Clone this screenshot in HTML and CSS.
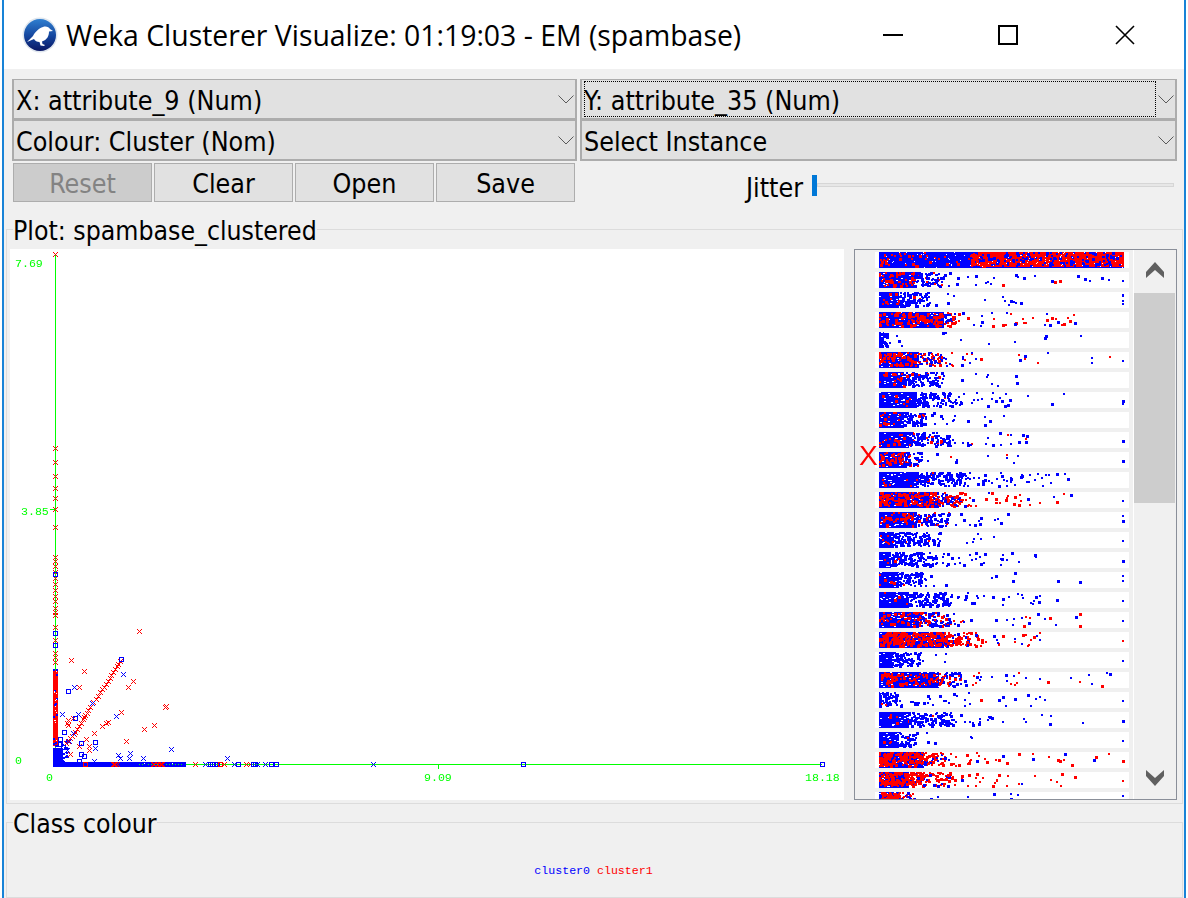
FILE: index.html
```html
<!DOCTYPE html>
<html lang="en">
<head>
<meta charset="utf-8">
<title>Weka Clusterer Visualize</title>
<link rel="stylesheet" href="styles.css">
</head>
<body>
<div class="window">
  <header class="titlebar">
    <svg class="app-icon" viewBox="0 0 36 36" aria-hidden="true">
      <defs>
        <linearGradient id="orb" x1="0" y1="0" x2="0" y2="1">
          <stop offset="0" stop-color="#2f7fd0"/>
          <stop offset="0.55" stop-color="#14449c"/>
          <stop offset="1" stop-color="#0a1764"/>
        </linearGradient>
      </defs>
      <circle cx="18" cy="18" r="17.500" fill="#dfe6ee"/>
      <circle cx="18" cy="18" r="16" fill="url(#orb)"/>
      <path d="M5 25 L11 19 C13 15 17 11 21 10 C24 9 27 10 28 12 L31 14 L27 14.500 C27 19 25 23 20 24.500 L20.500 27 L23 28 L22 29 L18.500 28.500 L17.500 25 C15 25 13 24 12 22 Z" fill="#fff"/>
    </svg>
    <h1 class="title">Weka Clusterer Visualize: 01:19:03 - EM (spambase)</h1>
    <div class="win-buttons">
      <svg class="win-btn min" viewBox="0 0 20 20" aria-hidden="true"><path d="M0 10H20" stroke="#000" stroke-width="2"/></svg>
      <svg class="win-btn max" viewBox="0 0 20 20" aria-hidden="true"><rect x="1" y="1" width="18" height="18" fill="none" stroke="#000" stroke-width="2"/></svg>
      <svg class="win-btn close" viewBox="0 0 20 20" aria-hidden="true"><path d="M1 1L19 19M19 1L1 19" stroke="#000" stroke-width="1.600"/></svg>
    </div>
  </header>

  <main class="content">
    <section class="controls">
      <div class="combo"><span>X: attribute_9 (Num)</span><svg class="chev" viewBox="0 0 16 9" aria-hidden="true"><path d="M0.500 0.500L8 8L15.500 0.500" fill="none" stroke="#5a5a5a"/></svg></div>
      <div class="combo focused"><span class="focus-ring">Y: attribute_35 (Num)</span><svg class="chev" viewBox="0 0 16 9" aria-hidden="true"><path d="M0.500 0.500L8 8L15.500 0.500" fill="none" stroke="#5a5a5a"/></svg></div>
      <div class="combo"><span>Colour: Cluster (Nom)</span><svg class="chev" viewBox="0 0 16 9" aria-hidden="true"><path d="M0.500 0.500L8 8L15.500 0.500" fill="none" stroke="#5a5a5a"/></svg></div>
      <div class="combo"><span>Select Instance</span><svg class="chev" viewBox="0 0 16 9" aria-hidden="true"><path d="M0.500 0.500L8 8L15.500 0.500" fill="none" stroke="#5a5a5a"/></svg></div>
      <div class="buttons">
        <button class="btn" disabled>Reset</button>
        <button class="btn">Clear</button>
        <button class="btn">Open</button>
        <button class="btn">Save</button>
      </div>
      <div class="jitter">
        <span class="jitter-label">Jitter</span>
        <div class="slider"><div class="thumb"></div><div class="track"></div></div>
      </div>
    </section>

    <fieldset class="group plot-group">
      <legend>Plot: spambase_clustered</legend>
      <div class="plot-row">
        <div class="plot">
          <canvas id="plot" width="834" height="551"></canvas>
          <span class="tick-label" style="left:5px;top:9px">7.69</span>
          <span class="tick-label" style="left:11px;top:257px">3.85</span>
          <span class="tick-label" style="left:5px;top:506px">0</span>
          <span class="tick-label" style="left:36px;top:523px">0</span>
          <span class="tick-label" style="left:414px;top:523px">9.09</span>
          <span class="tick-label" style="left:795px;top:523px">18.18</span>
        </div>
        <div class="attr-panel">
          <div class="attr-gutter"><span class="x-mark">X</span></div>
          <canvas id="bars" width="258" height="549"></canvas>
          <div class="scrollbar">
            <div class="arrow-box"><svg class="arrow up" viewBox="0 0 18 16" aria-hidden="true"><path d="M0 10L9 0L18 10V16L9 8L0 16Z" fill="#606060"/></svg></div>
            <div class="sb-thumb"></div>
            <div class="sb-space"></div>
            <div class="arrow-box"><svg class="arrow" viewBox="0 0 18 16" aria-hidden="true"><path d="M0 0L9 8L18 0V6L9 16L0 6Z" fill="#606060"/></svg></div>
          </div>
        </div>
      </div>
    </fieldset>

    <fieldset class="group class-group">
      <legend>Class colour</legend>
      <div class="class-legend"><span class="c0">cluster0</span> <span class="c1">cluster1</span></div>
    </fieldset>
  </main>
</div>
<script src="script.js"></script>
</body>
</html>
```

FILE: styles.css
```css
* { box-sizing: border-box; }
html, body { margin: 0; height: 100%; background: #fff; }
body { padding: 0 2px 0 2px; overflow: hidden; }
.window {
  height: 898px;
  border-left: 2px solid #1883d7;
  border-right: 2px solid #1883d7;
  background: #f0f0f0;
  display: flex;
  flex-direction: column;
  font-family: "DejaVu Sans Condensed", "DejaVu Sans", sans-serif;
  font-stretch: condensed;
  color: #000;
}
.titlebar {
  height: 69px;
  background: #fff;
  display: flex;
  align-items: center;
  padding-left: 18px;
  flex: none;
}
.app-icon { width: 36px; height: 36px; flex: none; }
.title {
  margin: 0 0 0 8px;
  font: 400 28.400px/36px "Open Sans", sans-serif;
  white-space: nowrap;
}
.win-buttons { margin-left: auto; display: flex; align-items: center; padding-right: 49px; }
.win-btn { width: 20px; height: 20px; display: block; }
.win-btn.min { margin-right: 95px; }
.win-btn.max { margin-right: 97px; }
.content { flex: 1; display: flex; flex-direction: column; min-height: 0; padding: 10px 0 0 2px; }
.controls {
  display: grid;
  grid-template-columns: 565px 597px;
  grid-template-rows: 41px 41px 41px;
  column-gap: 3px;
  margin-left: 6px;
  font-size: 26.600px;
}
.combo {
  background: #e1e1e1;
  border: 2px solid #acacac;
  border-top-width: 1px;
  display: flex;
  align-items: center;
  justify-content: space-between;
  padding: 0 1px 0 2px;
  white-space: nowrap;
  line-height: 36px;
}
.combo span { flex: 1; padding-top: 2px; height: 36px; line-height: 36px; }
.focus-ring { outline: 1px dotted #000; outline-offset: -1px; }
.chev { width: 16px; height: 9px; flex: none; margin-left: 2px; }
.buttons {
  display: grid;
  grid-template-columns: repeat(4, 139px);
  column-gap: 2px;
  padding: 2px 0 0 1px;
}
.btn {
  height: 39px;
  background: #e1e1e1;
  border: 1px solid #adadad;
  font: inherit;
  font-stretch: condensed;
  color: #000;
  padding: 2px 0 0;
  line-height: 36px;
}
.btn:disabled { background: #cccccc; color: #838383; }
.jitter { display: flex; align-items: center; padding-left: 166px; padding-top: 12px; }
.jitter-label { width: 66px; }
.slider { flex: 1; display: flex; align-items: center; margin-right: 3px; margin-top: -5px; }
.thumb { width: 5px; height: 21px; background: #0078d7; flex: none; }
.track { flex: 1; height: 4px; background: #e7e7e7; border: 1px solid #d6d6d6; }

.group { border: 1px solid #dcdcdc; margin: 0; min-width: 0; }
.group legend { padding: 0; font-size: 26.400px; line-height: 40px; height: 36px; }
.plot-group { margin: 9px 0 0 0; width: 1177px; padding: 2px 5px 3px 3px; height: 593px; }
.plot-group legend { margin-left: 3px; }
.plot-row { display: flex; justify-content: space-between; height: 551px; }
.plot { position: relative; width: 834px; height: 551px; background: #fff; }
.plot canvas { display: block; }
.tick-label {
  position: absolute;
  font: 11.600px/12px "Liberation Mono", monospace;
  color: #00ff00;
}
.attr-panel {
  width: 323px;
  height: 551px;
  border: 1px solid #8a8f99;
  display: flex;
  background: #f0f0f0;
}
.attr-gutter { width: 20px; position: relative; flex: none; }
.x-mark {
  position: absolute;
  left: 4px;
  top: 190px;
  font: 28px/32px "Liberation Sans", sans-serif;
  color: #ff0000;
}
#bars { display: block; flex: none; }
.scrollbar {
  width: 43px;
  border-left: 1px solid #fff;
  display: flex;
  flex-direction: column;
  flex: none;
}
.arrow-box { height: 43px; display: flex; align-items: center; justify-content: center; flex: none; padding-right: 1px; }
.arrow { width: 18px; height: 16px; display: block; }
.arrow.up { margin-bottom: 3px; }
.sb-thumb { height: 210px; background: #cdcdcd; margin-right: 1px; flex: none; }
.sb-space { flex: 1; }
.class-group { margin: 0; width: 1177px; height: 94px; padding: 0; }
.class-group legend { margin-left: 6px; }
.class-legend {
  text-align: center;
  font: 11.600px/12px "Liberation Mono", monospace;
  padding: 25px 0 0 0;
  margin-right: 2px;
  white-space: pre;
}
.c0 { color: #0000ff; }
.c1 { color: #ff0000; }
```

FILE: script.js
```js
(function () {
  var seed = 12345;
  function rnd() {
    seed = (seed * 1664525 + 1013904223) >>> 0;
    return seed / 4294967296;
  }
  var BLUE = '#0000ff', RED = '#ff0000', GREEN = '#00ff00';

  /* ---------- scatter plot ---------- */
  var pc = document.getElementById('plot').getContext('2d');
  var OX = 10, OY = 249;
  function px(c, x, y, w, h) { pc.fillStyle = c; pc.fillRect(x - OX, y - OY, w || 1, h || 1); }
  function cross(c, x, y) {
    x = Math.round(x); y = Math.round(y);
    for (var i = -2; i <= 2; i++) { px(c, x + i, y + i); px(c, x + i, y - i); }
  }
  function square(c, x, y) {
    x = Math.round(x); y = Math.round(y);
    px(c, x - 2, y - 2, 5, 1); px(c, x - 2, y + 2, 5, 1);
    px(c, x - 2, y - 2, 1, 5); px(c, x + 2, y - 2, 1, 5);
  }
  function Z(fn, c, list) {
    list.forEach(function (p) { fn(c, 40 + p[0] / 3, 540 + p[1] / 3); });
  }

  px(GREEN, 55, 254, 1, 511);
  px(GREEN, 53, 764, 769, 1);
  px(GREEN, 50, 509, 5, 1);
  px(GREEN, 438, 765, 1, 4);

  [254, 448, 462, 476, 488, 498, 509, 527].forEach(function (y) { cross(RED, 55, y); });
  [557, 561, 566, 572, 578, 584, 590, 596, 601, 608, 612, 615, 627, 640, 653, 657, 662].forEach(function (y) {
    cross(RED, 55, y);
  });

  /* red column and blue block at the origin */
  px(RED, 53, 670, 5, 76);
  for (var i = 0; i < 26; i++) {
    var yy = 668 + Math.floor(rnd() * 78);
    if (i % 2) px('#fff', 54 + Math.floor(rnd() * 3), yy); else px(BLUE, 53 + Math.floor(rnd() * 4), yy, 2, 2);
  }
  px(BLUE, 53, 748, 10, 18);
  for (i = 0; i < 30; i++) px(BLUE, 55 + rnd() * 14 | 0, 738 + rnd() * 26 | 0, 2, 2);

  /* main diagonal */
  var diag = [[78, 610], [95, 590], [110, 570], [128, 538], [138, 522], [157, 490], [180, 458], [197, 433], [213, 407], [230, 378], [244, 358]];
  for (i = 0; i < diag.length - 1; i++) {
    for (var t = 0; t < 3; t++) {
      var f = t / 3 + rnd() * 0.1;
      cross(RED, 40 + (diag[i][0] + (diag[i + 1][0] - diag[i][0]) * f) / 3, 540 + (diag[i][1] + (diag[i + 1][1] - diag[i][1]) * f) / 3);
    }
  }
  Z(cross, RED, [[298, 274], [94, 361], [133, 394], [280, 424], [265, 441], [118, 441], [378, 497], [375, 500], [244, 517], [203, 547], [197, 549], [187, 559], [343, 556], [313, 568], [163, 580], [259, 604], [138, 598], [116, 618], [147, 618], [147, 630], [91, 643], [85, 540], [82, 550], [85, 556], [100, 535]]);
  Z(cross, BLUE, [[250, 403], [103, 441], [67, 523], [115, 523], [229, 529], [157, 490], [394, 628], [235, 646], [241, 655], [271, 640], [268, 655], [310, 655], [163, 664], [166, 625], [88, 604], [100, 580], [80, 630], [60, 640]]);
  Z(square, BLUE, [[46, 103], [46, 280], [46, 315], [244, 358], [85, 454], [106, 535], [73, 577], [61, 597], [124, 610], [166, 607], [124, 643], [133, 649], [118, 664], [70, 622], [60, 612]]);

  /* dense strip along the x axis */
  px(BLUE, 53, 762, 133, 5);
  [113, 114, 115, 117, 153, 154, 157, 158, 160, 161, 162].forEach(function (x) { cross(RED, x, 764); });
  square(RED, 85, 764);
  for (var gx = 139; gx < 184; gx += 3) { if (rnd() > 0.3) px(GREEN, gx, 764); }
  for (gx = 140; gx < 184; gx += 4) { if (rnd() > 0.6) px('#fff', gx, 763); }

  [195, 250].forEach(function (x) { cross(RED, x, 764); });
  [205, 218, 234, 257, 265, 373].forEach(function (x) { cross(BLUE, x, 764); });
  cross(RED, 224, 764); cross(RED, 246, 764);
  cross(BLUE, 227, 758);
  square(BLUE, 182, 764); square(BLUE, 210, 764); square(BLUE, 212, 764); square(BLUE, 217, 764);
  square(RED, 220, 764);
  square(BLUE, 238, 764); square(BLUE, 253, 764); square(BLUE, 255, 764);
  square(BLUE, 271, 764); square(BLUE, 276, 764); square(BLUE, 523, 764); square(BLUE, 822, 764);

  /* ---------- attribute bars ---------- */
  var bc = document.getElementById('bars').getContext('2d');
  var X0 = 4;
  var rows = [
    /* a, b, c, n, redSolid, redTail, edge */
    [35, 60, 240, 34, .25, .1, 1],
    [20, 50, 160, 14, .1, 0, 5],
    [65, 72, 220, 46, .3, .6, 0],
    [5, 10, 230, 12, 0, 0, 0],
    [40, 62, 245, 30, .3, .5, 1],
    [25, 60, 150, 14, .12, 0, 0],
    [38, 70, 185, 34, .03, 0, 2],
    [25, 45, 135, 18, .1, 0, 0],
    [30, 70, 155, 24, .08, .08, 1],
    [25, 42, 150, 12, .35, .2, 1],
    [40, 80, 190, 62, .03, .02, 0],
    [60, 80, 195, 42, .4, .7, 1],
    [35, 70, 130, 12, .25, .1, 2],
    [15, 55, 135, 12, .08, .02, 1],
    [12, 50, 160, 44, .03, 0, 1],
    [20, 45, 205, 12, .04, 0, 2],
    [30, 70, 180, 32, .02, 0, 1],
    [40, 70, 210, 26, .2, .4, 1],
    [65, 90, 165, 34, .6, .8, 1],
    [15, 40, 85, 6, 0, 0, 1],
    [60, 80, 235, 32, .25, .3, 0],
    [3, 16, 185, 44, .05, .03, 1],
    [30, 72, 215, 26, .03, 0, 1],
    [20, 36, 190, 8, .03, 0, 1],
    [45, 62, 240, 44, .7, .85, 1],
    [30, 72, 210, 30, .7, .9, 1],
    [20, 36, 245, 14, .75, .3, 2]
  ];
  function dot(c, x, y) {
    var s = rnd() < 0.3 ? 3 : 2;
    bc.fillStyle = c;
    bc.fillRect(X0 + x, y, s, s);
  }
  function drawRow(idx, y) {
    bc.fillStyle = '#fff';
    bc.fillRect(0, y, 254, 16);
    var i;
    if (idx === 0) {
      bc.fillStyle = BLUE; bc.fillRect(X0, y, 245, 16);
      for (i = 0; i < 150; i++) dot(RED, 92 + rnd() * 20 | 0, y + (rnd() * 14 | 0));
      bc.fillStyle = RED;
      bc.fillRect(X0 + 104, y, 141, 15);
      for (i = 0; i < 130; i++) dot(BLUE, 100 + rnd() * 143 | 0, y + (rnd() * 14 | 0));
      for (i = 0; i < 40; i++) dot(RED, rnd() * 96 | 0, y + (rnd() * 14 | 0));
      for (i = 0; i < 90; i++) { bc.fillStyle = '#fff'; bc.fillRect(X0 + (rnd() * 245 | 0), y + (rnd() * 16 | 0), 1, 1); }
      return;
    }
    var p = rows[idx - 1], a = p[0], b = p[1], c = p[2], n = p[3], rs = p[4], rt = p[5], edge = p[6];
    bc.fillStyle = BLUE; bc.fillRect(X0, y, a, 16);
    var holes = a * 16 * 0.03;
    for (i = 0; i < holes; i++) { bc.fillStyle = '#fff'; bc.fillRect(X0 + (rnd() * a | 0), y + (rnd() * 15 | 0), 2, 1); }
    var reds = a * 16 * rs / 3;
    for (i = 0; i < reds; i++) dot(RED, rnd() * a | 0, y + (rnd() * 14 | 0));
    var mids = (b - a) * 16 * 0.17;
    for (i = 0; i < mids; i++) {
      var mx = a + Math.pow(rnd(), 1.3) * (b - a) | 0;
      dot(rnd() < (rs + rt) / 2 ? RED : BLUE, mx, y + (rnd() * 14 | 0));
    }
    for (i = 0; i < n; i++) {
      var tx = b + Math.pow(rnd(), 1.9) * (c - b) | 0;
      dot(rnd() < rt ? RED : BLUE, tx, y + (rnd() * 14 | 0));
    }
    for (i = 0; i < edge; i++) {
      dot(rs > .5 && i === 0 ? RED : BLUE, 243, y + (i === 0 ? 8 : rnd() * 14 | 0));
    }
  }
  for (var r = 0; r < 28; r++) drawRow(r, 2 + r * 20);
})();
```
